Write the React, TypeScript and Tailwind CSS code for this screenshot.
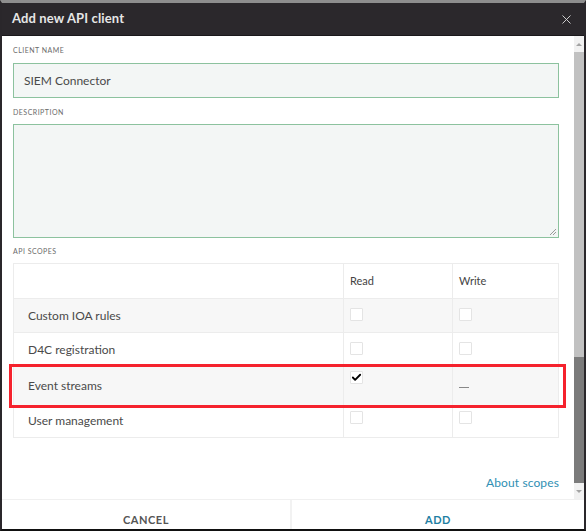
import { X, Check } from 'lucide-react'

const rows = [
  { name: 'Custom IOA rules', read: false, write: 'box', shade: true },
  { name: 'D4C registration', read: false, write: 'box', shade: false },
  { name: 'Event streams', read: true, write: 'dash', shade: true, marked: true },
  { name: 'User management', read: false, write: 'box', shade: false },
]

function Box({ checked }: { checked?: boolean }) {
  return (
    <div className="w-[13px] h-[13px] border border-[#e4e4e4] bg-white rounded-[1px] flex items-center justify-center">
      {checked && <Check className="w-[11px] h-[11px] text-black" strokeWidth={4} />}
    </div>
  )
}

function Label({ children }: { children: string }) {
  return <div className="h-[10px] text-[7px] leading-[10px] tracking-[0.07em] text-[#6b6b6b] uppercase">{children}</div>
}

export default function App() {
  return (
    <div className="relative w-[586px] h-[531px] flex flex-col bg-white border-t-[3px] border-t-[#8e8e8e] border-x-2 border-b-2 border-x-[#2a272b] border-b-[#111] font-['Lato','Liberation_Sans',sans-serif]">
      {/* header */}
      <div className="h-[33px] shrink-0 bg-[#2b282c] flex items-center justify-between pl-[10px] pr-[10px] border-b border-[#1a181b]">
        <span className="text-[13px] font-bold text-[#e6e6e6] tracking-[0.01em]">Add new API client</span>
        <X className="w-[15px] h-[15px] text-[#d8d8d8]" strokeWidth={1.5} />
      </div>

      <div className="flex flex-1 min-h-0">
        <div className="flex-1 pl-[11px] pr-[15px] pt-[9px] flex flex-col">
          <Label>Client name</Label>
          <div className="mt-[8px] h-[35px] border border-[#8cc29e] bg-[#f3f6f5] flex items-center px-[10px] text-[12px] text-[#4a4a4a]">
            SIEM Connector
          </div>
          <div className="mt-[9px]">
            <Label>Description</Label>
          </div>
          <div className="mt-[7px] h-[114px] border border-[#8cc29e] bg-[#f3f6f5] relative">
            <svg className="absolute right-[1px] bottom-[1px]" width="9" height="9" viewBox="0 0 9 9">
              <path d="M8 2 L2 8 M8 5 L5 8" stroke="#9a9a9a" strokeWidth="1" />
            </svg>
          </div>
          <div className="mt-[8px]">
            <Label>API scopes</Label>
          </div>

          <div className="mt-[7px] border border-[#ececec]">
            <div className="h-[35px] flex items-center text-[11px] text-[#444] border-b border-[#ececec]">
              <div className="flex-1 h-full border-r border-[#ececec]" />
              <div className="w-[109px] h-full flex items-center pl-[6px] border-r border-[#ececec]">Read</div>
              <div className="w-[105px] h-full flex items-center pl-[6px]">Write</div>
            </div>
            {rows.map((r, i) => (
              <div
                key={r.name}
                className={`flex text-[12px] text-[#4a4a4a] ${i < rows.length - 1 ? 'border-b border-[#ececec]' : ''} ${r.shade ? 'bg-[#f7f7f7]' : 'bg-white'} ${r.marked ? 'h-[39px]' : i === 3 ? 'h-[31px]' : 'h-[34px]'}`}
              >
                <div className={`flex-1 flex pl-[14px] border-r border-[#ececec] ${i === 3 ? 'items-start pt-[6px]' : 'items-center'}`}>
                  {r.name}
                </div>
                <div className={`w-[109px] flex pl-[6px] border-r border-[#ececec] ${r.marked ? 'items-start pt-[4px]' : i === 3 ? 'items-start pt-[5px]' : 'items-start pt-[9px]'}`}>
                  <Box checked={r.read} />
                </div>
                <div className={`w-[105px] flex pl-[6px] ${r.marked ? 'items-center pt-[2px]' : i === 3 ? 'items-start pt-[5px]' : 'items-start pt-[9px]'}`}>
                  {r.write === 'dash' ? <div className="w-[10px] h-[1px] bg-[#888]" /> : <Box />}
                </div>
              </div>
            ))}
          </div>

          <div className="mt-[36px] flex justify-end text-[12px] text-[#2f8fb3] tracking-[0.01em]">About scopes</div>
        </div>

        {/* scrollbar */}
        <div className="w-[10px] flex flex-col bg-[#f1f1f1]">
          <div className="h-[16px] flex items-center justify-center">
            <div className="w-0 h-0 border-x-[3px] border-x-transparent border-b-[3px] border-b-[#a3a3a3]" />
          </div>
          <div className="h-[305px] bg-[#c1c1c1]" />
          <div className="flex-1 bg-[#7b7b7b]" />
          <div className="h-[16px] flex items-center justify-center">
            <div className="w-0 h-0 border-x-[3px] border-x-transparent border-t-[3px] border-t-[#a3a3a3]" />
          </div>
        </div>
      </div>

      {/* footer */}
      <div className="h-[30px] shrink-0 flex border-t border-[#f0f0f0] text-[11px] font-bold tracking-[0.05em]">
        <div className="w-[290px] flex items-center justify-center pt-[12px] text-[#555] border-r-2 border-[#f2f2f2]">CANCEL</div>
        <div className="flex-1 flex items-center justify-center pt-[12px] text-[#1f7fa3]">ADD</div>
      </div>

      {/* highlight box around Event streams row */}
      <div className="absolute left-[7px] top-[361px] w-[557px] h-[44px] border-[3px] border-[#f5222d] pointer-events-none" />
    </div>
  )
}
